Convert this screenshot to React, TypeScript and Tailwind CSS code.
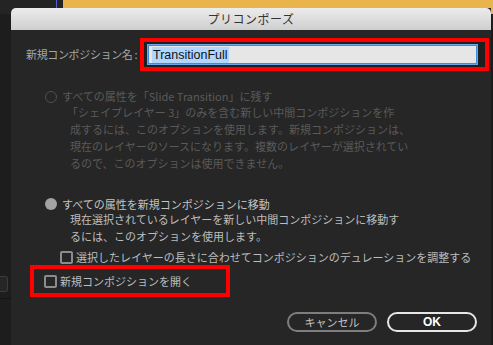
const jp = "font-['Noto_Sans_CJK_JP','Noto_Sans',sans-serif]";

const Radio = ({ checked, disabled }: { checked?: boolean; disabled?: boolean }) =>
  checked ? (
    <span className="inline-block size-[12px] shrink-0 rounded-full bg-[#a3a3a3]" />
  ) : (
    <span
      className={`inline-block size-[12px] shrink-0 rounded-full border-[1.5px] ${
        disabled ? "border-[#505050]" : "border-[#9a9a9a]"
      }`}
    />
  );

const Checkbox = () => (
  <span className="inline-block size-[13px] shrink-0 rounded-[2px] border-2 border-[#8c8c8c] bg-[#262626]" />
);

export default function App() {
  return (
    <div className={`relative h-[345px] w-[493px] overflow-hidden bg-[#1d1d1d] ${jp}`}>
      {/* desktop behind the dialog */}
      <div className="absolute left-0 top-0 flex h-[14px] w-full">
        <div className="h-full w-[56px] bg-[#242424]" />
        <div className="h-full w-px bg-[#5260c8]" />
        <div className="h-full w-[6px] bg-[#242424]" />
        <div className="h-full flex-1 bg-[#e9b44c]" />
      </div>
      <div className="absolute left-0 top-[276px] h-[16px] w-[8px] rounded-r-[3px] border border-l-0 border-[#3c3c3c] bg-[#262626]" />
      <div className="absolute left-0 top-[298px] h-px w-[11px] bg-[#141414]" />

      {/* dialog */}
      <div className="absolute left-[11px] top-[8px] flex h-[337px] w-[480px] flex-col bg-[#262626]">
        <div className="flex h-[22px] items-center justify-center rounded-t-[5px] bg-gradient-to-b from-[#ececec] to-[#cfcfcf] text-[12px] tracking-[0.5px] text-[#333]">
          プリコンポーズ
        </div>

        {/* name row */}
        <div className="mt-[8px] flex items-center">
          <span className="ml-[15px] w-[114px] whitespace-nowrap text-[11px] tracking-[-0.35px] text-[#a6a6a6]">
            新規コンポジション名 :
          </span>
          <div className="flex h-[33px] w-[349px] items-center border-4 border-[#ff0000] bg-[#1f1f1f] pl-[4px] pr-[8px]">
            <div className="flex h-[19px] flex-1 items-center border border-[#3b8be0] bg-[#e6e6e6] pl-[3px] shadow-[0_0_0_1px_#6aa7ea]">
              <span className="bg-[#b3d6fd] px-px font-['Liberation_Sans',sans-serif] text-[12.5px] leading-[16px] text-[#111]">
                TransitionFull
              </span>
            </div>
          </div>
        </div>

        {/* option 1 (disabled) */}
        <div className="ml-[34px] mt-[18px] flex h-[15px] items-center gap-[5px] text-[11px] text-[#5a5a5a]">
          <Radio disabled />
          <span className="whitespace-nowrap">すべての属性を「Slide Transition」に残す</span>
        </div>
        <div className="ml-[56px] text-[11px] leading-[17px] text-[#5a5a5a]">
          <div className="whitespace-nowrap">「シェイプレイヤー 3」のみを含む新しい中間コンポジションを作</div>
          <div className="whitespace-nowrap pl-[3px]">成するには、このオプションを使用します。新規コンポジションは、</div>
          <div className="whitespace-nowrap pl-[3px]">現在のレイヤーのソースになります。複数のレイヤーが選択されてい</div>
          <div className="whitespace-nowrap pl-[3px]">るので、このオプションは使用できません。</div>
        </div>

        {/* option 2 */}
        <div className="ml-[34px] mt-[25px] flex h-[14px] items-center gap-[5px] text-[11px] text-[#c4c4c4]">
          <Radio checked />
          <span className="whitespace-nowrap">すべての属性を新規コンポジションに移動</span>
        </div>
        <div className="ml-[59px] text-[11px] leading-[16.5px] text-[#bdbdbd]">
          <div className="whitespace-nowrap">現在選択されているレイヤーを新しい中間コンポジションに移動す</div>
          <div className="whitespace-nowrap">るには、このオプションを使用します。</div>
        </div>

        <div className="ml-[49px] mt-[6px] flex h-[14px] items-center gap-[3px] text-[11px] text-[#bdbdbd]">
          <Checkbox />
          <span className="whitespace-nowrap">選択したレイヤーの長さに合わせてコンポジションのデュレーションを調整する</span>
        </div>

        <div className="ml-[19px] mt-px flex h-[32px] w-[200px] items-center gap-[3px] border-4 border-[#ff0000] pl-[10px] text-[11px] text-[#bdbdbd]">
          <Checkbox />
          <span className="whitespace-nowrap">新規コンポジションを開く</span>
        </div>

        {/* buttons */}
        <div className="mt-[15px] flex justify-end gap-[10px] pr-[14px]">
          <button className="flex h-[20px] w-[90px] items-center justify-center rounded-full border-2 border-[#7e7e7e] text-[11px] text-[#c2c2c2]">
            キャンセル
          </button>
          <button className="flex h-[20px] w-[90px] items-center justify-center rounded-full border-2 border-[#e6e6e6] font-['Liberation_Sans',sans-serif] text-[12px] font-bold text-white">
            OK
          </button>
        </div>
      </div>
      <div className="absolute right-0 top-[30px] h-[315px] w-[2px] bg-[#1a1a1a]" />
    </div>
  );
}
